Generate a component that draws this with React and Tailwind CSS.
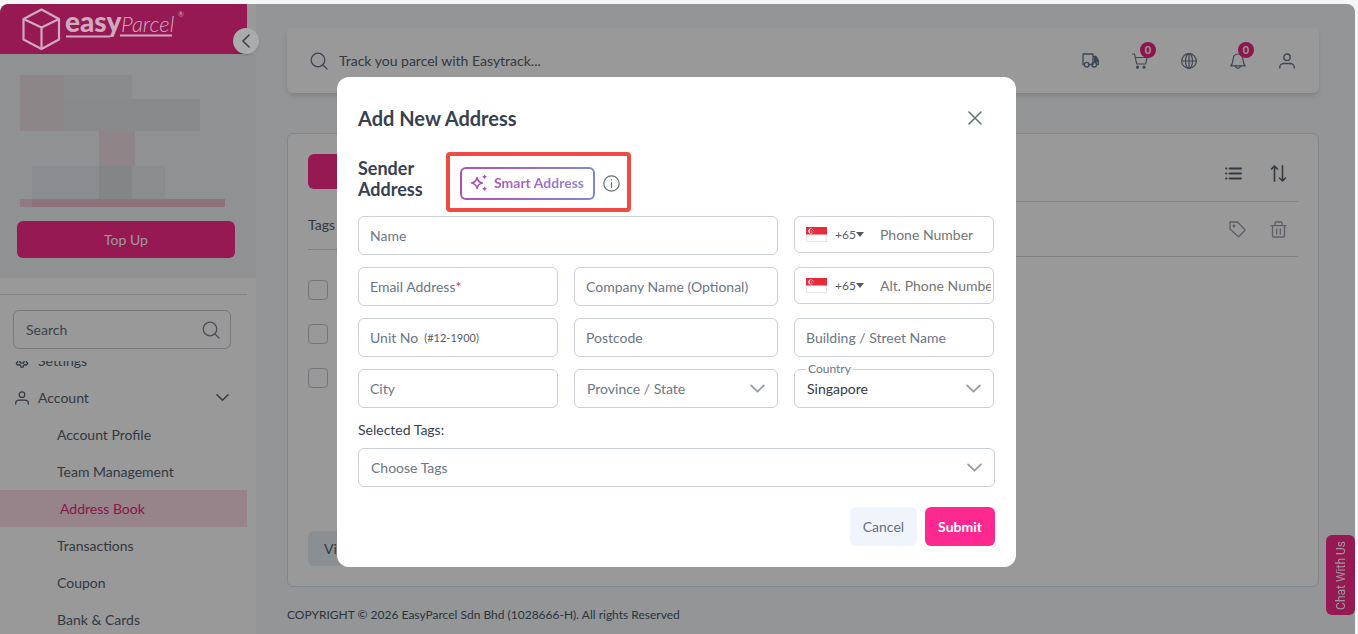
import React, { useState } from "react";

const menuItems = [
  "Account Profile",
  "Team Management",
  "Address Book",
  "Transactions",
  "Coupon",
  "Bank & Cards",
];

const Svg = ({ children, className = "size-4", box = 16, width = 1.2 }) => (
  <svg
    viewBox={`0 0 ${box} ${box}`}
    className={`shrink-0 ${className}`}
    fill="none"
    stroke="currentColor"
    strokeWidth={width}
    strokeLinecap="round"
    strokeLinejoin="round"
    aria-hidden="true"
  >
    {children}
  </svg>
);

const SearchIcon = () => (
  <Svg className="size-[18px]" box={18} width={1.3}>
    <circle cx="8" cy="8" r="6.8" />
    <path d="M13 13l4 4" />
  </Svg>
);

const UserIcon = ({ className }) => (
  <Svg className={className} width={1.4}>
    <circle cx="8" cy="4.2" r="3.2" />
    <path d="M.8 15v-1c0-2.200 2-3.500 4-3.500h6.400c2 0 4 1.300 4 3.500v1" />
  </Svg>
);

const GearIcon = () => (
  <Svg className="size-[14px]" width={1.5}>
    <circle cx="8" cy="8" r="2.5" />
    <path d="M6.7 1h2.600l.4 2 1.500.9 2-.7 1.300 2.200-1.500 1.400v2.400l1.500 1.400-1.300 2.200-2-.7-1.500.9-.4 2H6.700l-.4-2-1.500-.9-2 .7-1.300-2.200L3 9.200V6.800L1.500 5.400l1.300-2.200 2 .7 1.500-.9z" />
  </Svg>
);

const TruckIcon = () => (
  <Svg className="size-[17px]" box={17} width={1.3}>
    <path d="M2.200 12.500H1V2h10v10.500H7.200M11 4.500h3l2.300 3.500v4.500h-1.600" />
    <path d="M12.500 5.500h1.300l2.200 3.300v1h-3.500z" fill="currentColor" />
    <circle cx="4.700" cy="12.700" r="2.300" />
    <circle cx="12.200" cy="12.700" r="2.300" />
  </Svg>
);

const CartIcon = () => (
  <Svg>
    <path d="M.6 1h2l2.100 10h9l1.300-6.500H3.400" />
    <circle cx="5.500" cy="14.200" r="1" fill="currentColor" />
    <circle cx="12" cy="14.200" r="1" fill="currentColor" />
  </Svg>
);

const GlobeIcon = () => (
  <Svg>
    <circle cx="8" cy="8" r="7.300" />
    <ellipse cx="8" cy="8" rx="3.500" ry="7.300" />
    <path d="M.7 8h14.600M8 .7v14.600" />
  </Svg>
);

const BellIcon = () => (
  <Svg>
    <path d="M.8 12.800h14.400c-1.700-1.500-2-2.800-2.200-6C12.800 3.500 11 1 8 1S3.200 3.500 3 6.800c-.2 3.200-.5 4.500-2.200 6z" />
    <path d="M5.500 13c.3 1.500 1.300 2.300 2.500 2.300s2.200-.8 2.500-2.300" />
  </Svg>
);

const ListIcon = () => (
  <Svg className="size-[17px]" box={17} width={1.8}>
    <path d="M4.500 3.500h11.500M4.500 8.500h11.500M4.500 13.500h11.500M1 3.500h.5M1 8.500h.5M1 13.500h.5" />
  </Svg>
);

const SortIcon = () => (
  <Svg className="size-[17px]" box={17} width={1.6}>
    <path d="M4.500 16.200V1M1.500 4l3-3 3 3M12.500.8V16M9.500 13l3 3 3-3" />
  </Svg>
);

const TagIcon = () => (
  <Svg className="size-[17px]" box={17} width={1.3}>
    <path d="M1 1h7.500l7 7.300a1 1 0 010 1.400l-5.300 5.600a1 1 0 01-1.400 0L1 8z" />
    <circle cx="5" cy="5" r=".8" fill="currentColor" />
  </Svg>
);

const TrashIcon = () => (
  <Svg className="size-[17px]" box={17} width={1.3}>
    <path d="M1 4.700h15M5 4.700V2c0-.6.4-1 1-1h5c.6 0 1 .4 1 1v2.700M2.500 4.700V15c0 .6.4 1 1 1h10c.6 0 1-.4 1-1V4.700M6.700 8v5M10.300 8v5" />
  </Svg>
);

const Chevron = ({ className }) => (
  <Svg className={className} box={14} width={1.6}>
    <path d="M1 4l6 6 6-6" />
  </Svg>
);

const Logo = () => (
  <a href="#home" aria-label="easyParcel">
    <svg viewBox="0 0 170 50" className="h-[50px] w-[170px]" fill="none">
      <g stroke="#cfa9bd" strokeWidth="2.200" strokeLinejoin="round">
        <path d="M19.500 5.500L37 15v20.500L19.500 45 1.500 35.500V15z" />
        <path d="M1.500 15l18 8.500L37 15M19.500 23.500V45" />
      </g>
      <text
        x="43"
        y="28"
        fill="#cfa9bd"
        fontFamily="Lato, sans-serif"
        fontWeight="900"
        fontSize="28"
      >
        easy
      </text>
      <text
        x="99"
        y="28"
        fill="#cfa9bd"
        fontFamily="Lato, sans-serif"
        fontWeight="300"
        fontStyle="italic"
        fontSize="22"
      >
        Parcel
      </text>
      <text x="156" y="13" fill="#cfa9bd" fontFamily="Lato, sans-serif" fontSize="7">
        ®
      </text>
      <path d="M44 32.500h44M98 31.500h52" stroke="#cfa9bd" strokeWidth="1.800" />
    </svg>
  </a>
);

// Obscured account details above the top up button
const ProfileMask = () => (
  <div className="ml-5 h-[132px] w-[205px]" aria-hidden="true">
    <div className="flex h-6 w-28">
      <div className="w-11 bg-[#eadfe3]" />
      <div className="flex-1 bg-[#e4e8ea]" />
    </div>
    <div className="flex h-8 w-[180px]">
      <div className="w-11 bg-[#eadfe3]" />
      <div className="flex-1 bg-[#e4e7e9]" />
    </div>
    <div className="ml-[79px] h-[35px] w-9 bg-[#eedde2]" />
    <div className="ml-3 flex h-[33px]">
      <div className="w-[67px] bg-[#e6eaee]" />
      <div className="w-[33px] bg-[#dadee0]" />
      <div className="w-[33px] bg-[#e6eaec]" />
    </div>
    <div className="flex h-2">
      <div className="w-3 bg-[#efcdd8]" />
      <div className="flex-1 bg-[#efbccb]" />
    </div>
  </div>
);

const Sidebar = () => (
  <aside className="flex w-64 shrink-0 flex-col bg-white">
    <div className="relative z-20 flex h-[50px] w-[247px] shrink-0 items-center rounded-tl-lg bg-[#961954] pl-[22px]">
      <Logo />
      <button
        aria-label="Collapse menu"
        className="absolute -right-3 top-6 flex size-[26px] items-center justify-center rounded-full bg-[#aaabab] text-[#3c4248] shadow"
      >
        <Chevron className="size-[14px] rotate-90" />
      </button>
    </div>
    <div className="h-56 shrink-0 bg-[#eff2f5] pt-[21px]">
      <ProfileMask />
      <button className="ml-[17px] mt-[14px] h-[37px] w-[218px] rounded-md bg-[#fa2a8c] text-sm text-white">
        Top Up
      </button>
    </div>
    <div className="mt-4 w-[247px] shrink-0 border-t border-[#d5d7da]" />
    <label className="ml-[13px] mt-[15px] flex h-[39px] w-[218px] shrink-0 items-center rounded-md border border-[#c3c9d0] pl-3 pr-2.5 text-[#7b828c]">
      <input
        aria-label="Search"
        placeholder="Search"
        className="w-full text-sm outline-none placeholder:text-[#64707d]"
      />
      <SearchIcon />
    </label>
    <nav className="mt-3 min-h-0 flex-1 overflow-hidden text-sm text-[#55616f]">
      <ul className="-mt-[19px] w-[247px]">
        <li>
          <a href="#settings" className="flex h-[37px] items-center gap-[9px] pl-[15px]">
            <GearIcon />
            Settings
          </a>
        </li>
        <li>
          <a href="#account" className="flex h-[37px] items-center gap-[9px] pl-[15px] pr-[18px]">
            <UserIcon className="size-[14px]" />
            <span className="flex-1">Account</span>
            <Chevron className="size-[13px]" />
          </a>
        </li>
        {menuItems.map((item) => (
          <li key={item}>
            <a
              href="#menu"
              className={`flex h-[37px] items-center ${
                item === "Address Book"
                  ? "bg-[#fadce7] pl-[60px] text-[#e42a78]"
                  : "pl-[57px]"
              }`}
            >
              {item}
            </a>
          </li>
        ))}
      </ul>
    </nav>
  </aside>
);

const HeaderButton = ({ label, count, children }) => (
  <button aria-label={label} className="relative flex size-[17px] items-center justify-center">
    {children}
    {count !== undefined && (
      <span className="absolute -right-2 -top-2.5 flex size-4 items-center justify-center rounded-full bg-[#ea2482] text-[11px] font-bold text-white">
        {count}
      </span>
    )}
  </button>
);

const TopBar = () => (
  <header className="flex h-[65px] shrink-0 items-center rounded-md bg-white pl-[23px] pr-6 text-[#68758c] shadow-md">
    <SearchIcon />
    <input
      aria-label="Track your parcel"
      placeholder="Track you parcel with Easytrack..."
      className="ml-[11px] flex-1 text-sm outline-none placeholder:text-[#55616f]"
    />
    <div className="flex gap-8">
      <HeaderButton label="Shipments">
        <TruckIcon />
      </HeaderButton>
      <HeaderButton label="Cart" count={0}>
        <CartIcon />
      </HeaderButton>
      <HeaderButton label="Language">
        <GlobeIcon />
      </HeaderButton>
      <HeaderButton label="Notifications" count={0}>
        <BellIcon />
      </HeaderButton>
      <HeaderButton label="Profile">
        <UserIcon />
      </HeaderButton>
    </div>
  </header>
);

const AddressList = () => (
  <section className="mt-10 flex h-[454px] shrink-0 rounded-md border border-[#d9dee4] bg-white px-5">
    <div className="flex flex-1 flex-col items-start pb-5 pt-5">
      <button
        aria-label="Add"
        className="h-[35px] w-40 rounded-md bg-[#fa2a8c]"
      />
      <div className="mt-6 w-full border-b border-[#d5d7da] pb-3 text-sm text-[#55616f]">
        <div className="h-6 leading-6">Tags</div>
      </div>
      <div className="mt-[30px] flex flex-1 flex-col gap-6">
        {[1, 2, 3].map((row) => (
          <input
            key={row}
            type="checkbox"
            aria-label={`Select address ${row}`}
            className="size-5 appearance-none rounded border border-[#bfc5cc]"
          />
        ))}
      </div>
      <button className="h-[35px] rounded-md bg-[#eaeff4] px-4 text-sm text-[#55616f]">
        View
      </button>
    </div>
    <div className="flex flex-1 flex-col text-[#55616f]">
      <div className="flex h-[68px] items-center justify-end gap-7 border-b border-[#d5d7da] pr-[11px] pt-3">
        <button aria-label="List view">
          <ListIcon />
        </button>
        <button aria-label="Sort">
          <SortIcon />
        </button>
      </div>
      <div className="flex h-[55px] items-center justify-end gap-6 border-b border-[#d5d7da] pr-[11px] text-[#9aa0a7]">
        <button aria-label="Edit tags">
          <TagIcon />
        </button>
        <button aria-label="Delete">
          <TrashIcon />
        </button>
      </div>
    </div>
  </section>
);

const fieldBox =
  "w-full rounded-md border border-[#cbd0d6] bg-white text-sm outline-none";

const Field = ({ id, label, required, hint, className = "" }) => (
  <div className={`relative ${className}`}>
    <input id={id} className={`${fieldBox} h-[39px] px-3`} />
    <label
      htmlFor={id}
      className="absolute inset-y-0 left-3 flex items-center text-sm text-[#6b7685]"
    >
      {label}
      {required && <span className="text-[#e0344c]">*</span>}
      {hint && <span className="ml-1.5 text-[11px] text-[#565b61]">{hint}</span>}
    </label>
  </div>
);

const SelectField = ({ id, label, option, floating, className = "" }) => (
  <div className={`relative ${className}`}>
    <select
      id={id}
      aria-label={label}
      className={`${fieldBox} h-[39px] appearance-none px-3 ${
        floating ? "text-[#2f3a46]" : "text-[#6b7685]"
      }`}
    >
      <option>{option}</option>
    </select>
    {floating && (
      <label
        htmlFor={id}
        className="absolute -top-2 left-3 bg-white px-0.5 text-xs leading-4 text-[#6b7685]"
      >
        {label}
      </label>
    )}
    <Chevron className="pointer-events-none absolute right-[13px] top-3 size-[15px] text-[#9299a5]" />
  </div>
);

const Flag = () => (
  <svg viewBox="0 0 21 15" className="h-[15px] w-[21px] shrink-0" aria-hidden="true">
    <rect x=".5" y=".5" width="20" height="14" fill="#fff" stroke="#e6e6e6" />
    <path d="M0 0h21v7.500H0z" fill="#e62b3c" />
    <circle cx="4.800" cy="3.900" r="2.500" fill="#fff" />
    <circle cx="5.800" cy="3.900" r="2.200" fill="#e62b3c" />
    <g fill="#fff">
      <circle cx="6.300" cy="2.500" r=".4" />
      <circle cx="5.200" cy="3.600" r=".4" />
      <circle cx="7.400" cy="3.600" r=".4" />
      <circle cx="5.700" cy="4.900" r=".4" />
      <circle cx="7" cy="4.900" r=".4" />
    </g>
  </svg>
);

const PhoneField = ({ placeholder }) => (
  <div className="flex h-[37px] items-center rounded-md border border-[#cbd0d6] pl-[11px] pr-0.5">
    <Flag />
    <select
      aria-label={`${placeholder} country code`}
      className="ml-2 w-[22px] appearance-none text-xs text-[#565b61] outline-none"
    >
      <option>+65</option>
    </select>
    <svg viewBox="0 0 8 5" className="h-[5px] w-2 shrink-0 fill-[#565b61]" aria-hidden="true">
      <path d="M0 0h8L4 5z" />
    </svg>
    <input
      aria-label={placeholder}
      placeholder={placeholder}
      className="ml-4 w-full min-w-0 text-sm outline-none placeholder:text-[#757575]"
    />
  </div>
);

const SmartAddress = () => (
  <div className="flex h-[60px] items-center gap-2 rounded border-4 border-[#f04b42] pl-2.5 pr-[7px] pt-0.5">
    <button className="rounded-md bg-linear-to-r from-[#ad4fba] to-[#7f86d6] p-0.5">
      <span className="flex h-[29px] items-center gap-1.5 rounded bg-white pl-2 pr-[9px]">
        <Svg className="size-[18px] text-[#ae50c0]" box={18} width={1.5}>
          <path d="M7 3.500c.6 3.400 2 4.900 5.500 5.500-3.500.6-4.900 2-5.500 5.500C6.400 11 5 9.600 1.500 9 5 8.400 6.400 6.900 7 3.500z" />
          <path d="M14.500 1.500v2.600M13.200 2.800h2.600M14.500 13.500v2.600M13.200 14.800h2.600" />
        </Svg>
        <span className="bg-linear-to-r from-[#ae50c0] to-[#8c7fdc] bg-clip-text text-sm font-bold text-transparent">
          Smart Address
        </span>
      </span>
    </button>
    <Svg className="size-[17px] text-[#666c73]" box={17}>
      <circle cx="8.500" cy="8.500" r="7.700" />
      <path d="M8.500 7.500v5M8.500 4.700v.2" />
    </Svg>
  </div>
);

const AddressModal = ({ onClose }) => (
  <div className="absolute inset-0 z-10 flex items-start justify-center bg-black/40 pr-0.5 pt-[73px]">
    <form
      role="dialog"
      aria-label="Add New Address"
      onSubmit={(e) => e.preventDefault()}
      className="w-1/2 min-w-[679px] rounded-xl bg-white px-[21px] pb-[21px]"
    >
      <div className="flex h-[75px] items-center justify-between pr-[13px] pt-1.5">
        <h2 className="text-xl font-bold text-[#364152]">Add New Address</h2>
        <button type="button" aria-label="Close" onClick={onClose} className="text-[#66707f]">
          <Svg className="size-[14px]" box={14} width={1.6}>
            <path d="M1 1l12 12M13 1L1 13" />
          </Svg>
        </button>
      </div>
      <div className="flex items-center">
        <h3 className="w-[88px] pb-1.5 text-lg/[21px] font-bold text-[#364152]">
          Sender
          <br />
          Address
        </h3>
        <SmartAddress />
      </div>
      <div className="mt-1 grid grid-cols-[200fr_204fr_200fr] gap-x-4 gap-y-3 pr-px">
        <Field id="name" label="Name" className="col-span-2" />
        <PhoneField placeholder="Phone Number" />
        <Field id="email" label="Email Address" required />
        <Field id="company" label="Company Name (Optional)" />
        <PhoneField placeholder="Alt. Phone Number" />
        <Field id="unit" label="Unit No" hint="(#12-1900)" />
        <Field id="postcode" label="Postcode" />
        <Field id="street" label="Building / Street Name" />
        <Field id="city" label="City" />
        <SelectField id="state" label="Province / State" option="Province / State" />
        <SelectField id="country" label="Country" option="Singapore" floating />
      </div>
      <label htmlFor="tags" className="mt-3 block text-sm text-[#364152]">
        Selected Tags:
      </label>
      <SelectField id="tags" label="Selected Tags" option="Choose Tags" className="mt-2" />
      <div className="mt-5 flex justify-end gap-2">
        <button
          type="button"
          onClick={onClose}
          className="h-[39px] rounded-md bg-[#f0f4fb] px-[13px] text-sm text-[#66727f]"
        >
          Cancel
        </button>
        <button type="submit" className="h-[39px] rounded-md bg-[#fe2990] px-[13px] text-sm font-bold text-white">
          Submit
        </button>
      </div>
    </form>
  </div>
);

const App = () => {
  const [open, setOpen] = useState(true);

  return (
    <div className="h-screen bg-[#f5f7f7] pr-[3px] pt-1 font-[Lato,sans-serif]">
      <div className="relative flex h-full overflow-hidden rounded-t-lg bg-[#f5f8fb]">
        <Sidebar />
        <main className="flex min-w-0 flex-1 flex-col pl-[31px] pr-9 pt-6">
          <TopBar />
          <AddressList />
          <footer className="mt-5 shrink-0 text-xs text-[#4a5866]">
            COPYRIGHT © 2026 EasyParcel Sdn Bhd (1028666-H). All rights Reserved
          </footer>
        </main>
        <button className="absolute bottom-[19px] right-0 flex h-20 w-[29px] items-center justify-center rounded-md bg-[#fa2a8c] text-white">
          <span className="rotate-180 font-[Roboto,sans-serif] text-xs [writing-mode:vertical-rl]">
            Chat With Us
          </span>
        </button>
        {open && <AddressModal onClose={() => setOpen(false)} />}
      </div>
    </div>
  );
};

export default App;
